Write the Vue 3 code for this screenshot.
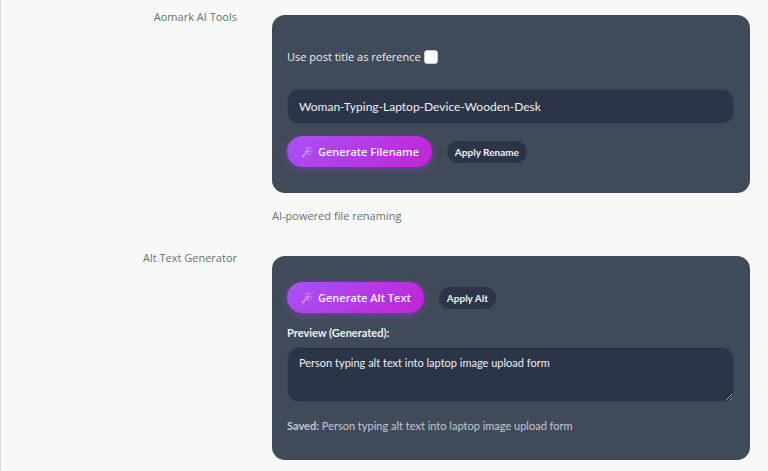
<script setup>
import { ref } from 'vue'

const useTitle = ref(false)
const filename = ref('Woman-Typing-Laptop-Device-Wooden-Desk')
const altText = ref('Person typing alt text into laptop image upload form')
const savedAlt = ref('Person typing alt text into laptop image upload form')
</script>

<template>
  <main class="fields">
    <section class="field">
      <h2 class="name">Aomark AI Tools</h2>
      <div class="value">
        <div class="panel">
          <div class="check">
            <label for="use-title">Use post title as reference</label>
            <input id="use-title" v-model="useTitle" type="checkbox" />
          </div>
          <input v-model="filename" class="box" type="text" aria-label="Filename" />
          <div class="actions">
            <button class="generate" type="button">
              <svg class="wand" viewBox="0 0 12 12" aria-hidden="true">
                <path d="M.8 10.4 6 5.2l.9.9-5.2 5.2z" />
                <path d="M6 5.2 7.3 3.9l.9.9L6.9 6.1" />
                <path d="M7.4.8v1.6M4.4 2l1.1 1.1M10.4 2 9.3 3.1M9.8 5h1.6M9.2 6.9l1.1 1.1M7.4 7.6v1.5M3.6 5h1.2M5.9 1.4l.3.8M9 1.4l-.3.8" />
              </svg>
              <span>Generate Filename</span>
            </button>
            <button class="apply" type="button">Apply Rename</button>
          </div>
        </div>
        <p class="help">AI-powered file renaming</p>
      </div>
    </section>

    <section class="field">
      <h2 class="name">Alt Text Generator</h2>
      <div class="value">
        <div class="panel">
          <div class="actions">
            <button class="generate" type="button">
              <svg class="wand" viewBox="0 0 12 12" aria-hidden="true">
                <path d="M.8 10.4 6 5.2l.9.9-5.2 5.2z" />
                <path d="M6 5.2 7.3 3.9l.9.9L6.9 6.1" />
                <path d="M7.4.8v1.6M4.4 2l1.1 1.1M10.4 2 9.3 3.1M9.8 5h1.6M9.2 6.9l1.1 1.1M7.4 7.6v1.5M3.6 5h1.2M5.9 1.4l.3.8M9 1.4l-.3.8" />
              </svg>
              <span>Generate Alt Text</span>
            </button>
            <button class="apply" type="button">Apply Alt</button>
          </div>
          <label class="preview" for="alt-preview">Preview (Generated):</label>
          <textarea id="alt-preview" v-model="altText" class="box area"></textarea>
          <p class="saved"><strong>Saved:</strong> {{ savedAlt }}</p>
        </div>
      </div>
    </section>
  </main>
</template>

<style>
body {
  background: #f6f9f8;
}
</style>

<style scoped>
.fields {
  box-sizing: border-box;
  min-height: 100vh;
  display: flex;
  flex-direction: column;
  gap: 32px;
  padding: 15px 18px 12px 0;
  border-left: 1px solid #d8dbdc;
  font-family: 'Open Sans', 'Noto Sans', sans-serif;
  font-size: 11px;
  line-height: 16px;
}
.field {
  display: grid;
  grid-template-columns: 236px minmax(0, 1fr);
  column-gap: 35px;
}
.name {
  margin: -6px 0 0;
  font-size: 11px;
  font-weight: 400;
  line-height: 16px;
  text-align: right;
  color: #6c7072;
}
.panel {
  display: flex;
  flex-direction: column;
  padding: 26px 16px 26px 15px;
  border-radius: 13px;
  background: #414a59;
  color: #edf0f5;
}
.check {
  display: flex;
  align-items: center;
  gap: 3px;
  margin: 8px 0 24px;
}
.check input {
  appearance: none;
  width: 14px;
  height: 14px;
  margin: 0;
  border: 1px solid #c5c9d0;
  border-radius: 3px;
  background: #fff;
}
.check input:checked {
  background: #a646ee;
}
.box {
  box-sizing: border-box;
  width: 100%;
  height: 35px;
  padding: 0 11px;
  border: 1px solid #394355;
  border-radius: 12px;
  background: #2c3547;
  color: #edf0f5;
  font-family: Lato, sans-serif;
  font-size: 12px;
  line-height: 16px;
}
.area {
  display: block;
  height: 55px;
  padding: 7px 11px;
  font-size: 11px;
  resize: vertical;
}
.actions {
  display: flex;
  align-items: center;
  gap: 15px;
}
.box + .actions {
  margin-top: 12px;
}
.generate {
  display: flex;
  align-items: center;
  gap: 5px;
  height: 31px;
  padding: 0 13px 0 14px;
  border: 0;
  border-radius: 16px;
  background: linear-gradient(135deg, #a752f5, #c026d3);
  box-shadow: 0 2px 8px rgba(155, 60, 235, 0.5);
  color: #fbf0ff;
  font: inherit;
  font-weight: 600;
}
.wand {
  width: 12px;
  height: 12px;
  fill: none;
  stroke: #f3cfff;
  stroke-width: 0.7;
}
.apply {
  height: 22px;
  padding: 0 8px;
  border: 0;
  border-radius: 11px;
  background: #2c3547;
  color: #edf0f5;
  font-family: Lato, sans-serif;
  font-size: 10px;
  font-weight: 700;
}
.help {
  margin: 15px 0 0;
  color: #6c7072;
}
.preview {
  margin: 12px 0 6px;
  font-family: Lato, sans-serif;
  font-weight: 700;
}
.saved {
  margin: 16px 0 0;
  font-family: Lato, sans-serif;
  color: #c3c8d0;
}
.saved strong {
  font-weight: 700;
}
</style>
